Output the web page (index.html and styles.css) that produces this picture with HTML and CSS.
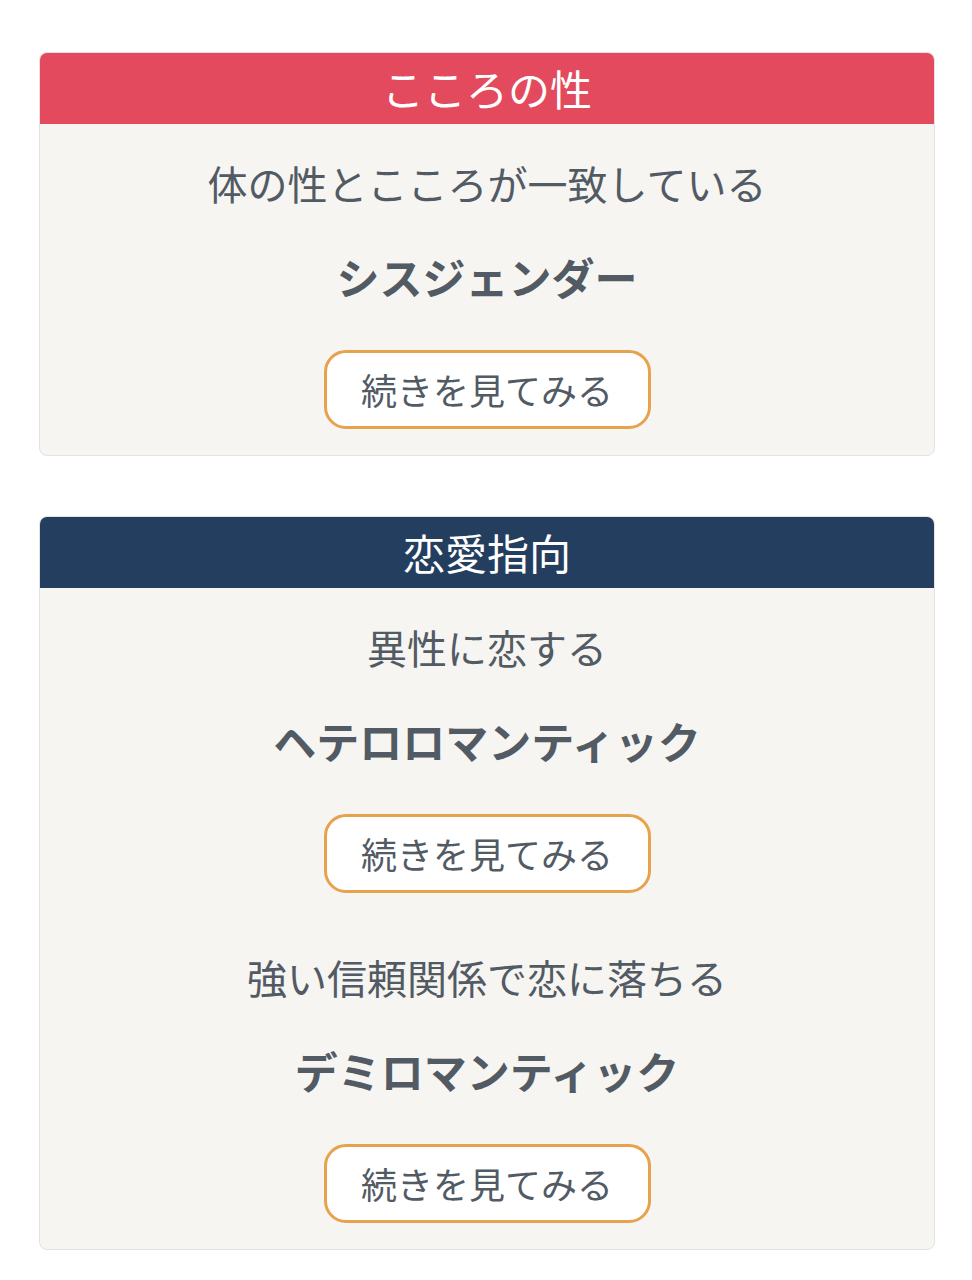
FILE: index.html
```html
<!DOCTYPE html>
<html lang="ja">
<head>
  <meta charset="UTF-8">
  <meta name="viewport" content="width=device-width, initial-scale=1">
  <title>こころの性・恋愛指向</title>
  <link rel="stylesheet" href="styles.css">
</head>
<body>
  <main class="page">
    <!-- こころの性 -->
    <section class="card">
      <h2 class="card-title card-title--red">こころの性</h2>
      <div class="card-body">
        <div class="item">
          <p class="lead">体の性とこころが一致している</p>
          <p class="term">シスジェンダー</p>
          <a class="more" href="#">続きを見てみる</a>
        </div>
      </div>
    </section>

    <!-- 恋愛指向 -->
    <section class="card">
      <h2 class="card-title card-title--navy">恋愛指向</h2>
      <div class="card-body">
        <div class="item">
          <p class="lead">異性に恋する</p>
          <p class="term">ヘテロロマンティック</p>
          <a class="more" href="#">続きを見てみる</a>
        </div>
        <div class="item">
          <p class="lead">強い信頼関係で恋に落ちる</p>
          <p class="term">デミロマンティック</p>
          <a class="more" href="#">続きを見てみる</a>
        </div>
      </div>
    </section>
  </main>
</body>
</html>
```

FILE: styles.css
```css
/* Reset & Basic Styling */
* {
  box-sizing: border-box;
  margin: 0;
  padding: 0;
}
body {
  font-family: "Noto Sans CJK JP", "Noto Sans", sans-serif;
  background: #fff;
  color: #525a64;
}
.page {
  padding: 52px 37px 0 39px;
  display: flex;
  flex-direction: column;
  gap: 60px;
}
/* Card */
.card {
  background: #f6f5f1;
  border: 1px solid #e4e2de;
  border-radius: 8px;
  overflow: hidden;
  text-align: center;
}
.card-title {
  height: 71px;
  line-height: 70px;
  font-size: 42px;
  font-weight: normal;
  color: #fff;
}
.card-title--red {
  background: #e34a5d;
}
.card-title--navy {
  background: #233e5e;
}
.card-body {
  padding: 30px 0 26px;
}
.item + .item {
  margin-top: 55px;
}
.lead {
  font-size: 40px;
  line-height: 58px;
}
.term {
  margin-top: 34px;
  font-size: 43px;
  line-height: 60px;
  font-weight: bold;
}
/* Button */
.more {
  display: block;
  width: 327px;
  height: 79px;
  margin: 44px auto 0;
  line-height: 73px;
  font-size: 36px;
  color: #525a64;
  text-decoration: none;
  background: #fff;
  border: 3px solid #e6a24c;
  border-radius: 22px;
}
```
